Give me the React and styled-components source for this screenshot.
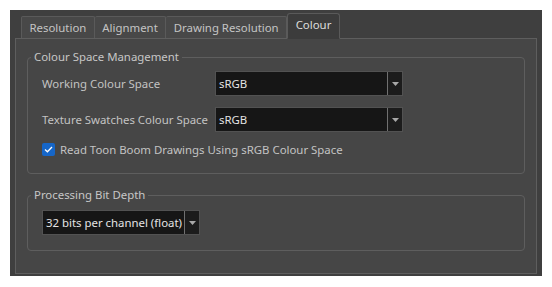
import React from "react";
import styled, { createGlobalStyle } from "styled-components";

const GlobalStyle = createGlobalStyle`
  html, body {
    margin: 0;
    padding: 0;
    background: #ffffff;
  }
  body {
    font-family: "Noto Sans", "Open Sans", sans-serif;
    font-size: 11.4px;
  }
`;

const Window = styled.div`
  margin: 10px;
  width: 532px;
  height: 266px;
  box-sizing: border-box;
  background: #3f3f3f;
  padding: 3px 5px 0 5px;
  display: flex;
  flex-direction: column;
`;

const TabBar = styled.div`
  display: flex;
  align-items: flex-end;
  padding-left: 6px;
  height: 25px;
  position: relative;
  z-index: 1;
`;

const Tab = styled.div`
  box-sizing: border-box;
  height: ${(p) => (p.$active ? "26px" : "22px")};
  padding: 0 7.5px;
  display: flex;
  align-items: center;
  white-space: nowrap;
  color: ${(p) => (p.$active ? "#dcdcdc" : "#c4c4c4")};
  background: ${(p) => (p.$active ? "#3c3c3c" : "#484848")};
  border: 1px solid #5a5a5a;
  border-bottom: ${(p) => (p.$active ? "1px solid #3c3c3c" : "none")};
  border-left: ${(p) => (p.$first || p.$active ? "1px solid #5a5a5a" : "none")};
  border-radius: ${(p) => (p.$active ? "3px 3px 0 0" : "2px 2px 0 0")};
  margin-bottom: ${(p) => (p.$active ? "-1px" : "0")};
  line-height: 1;
  padding-bottom: ${(p) => (p.$active ? "3px" : "0")};
`;

const Pane = styled.div`
  flex: 1;
  box-sizing: border-box;
  margin-bottom: 2px;
  background: #464646;
  border: 1px solid #5e5e5e;
  padding: 10px 11px 0 11px;
  display: flex;
  flex-direction: column;
  gap: 13px;
`;

const Group = styled.fieldset`
  margin: 0;
  border: 1px solid #5e5e5e;
  border-radius: 4px;
  padding: ${(p) => p.$pad};
  min-width: 0;
`;

const Legend = styled.legend`
  color: #c6c6c6;
  padding: 0 3px;
  margin-left: -11px;
  line-height: 16px;
`;

const FormGrid = styled.div`
  display: grid;
  grid-template-columns: 173px 188px;
  row-gap: 11px;
  align-items: center;
`;

const Label = styled.div`
  color: #c3c3c3;
  white-space: nowrap;
`;

const Combo = styled.div`
  box-sizing: border-box;
  width: ${(p) => p.$width}px;
  height: 25px;
  display: flex;
  background: #161616;
  border: 1px solid #525252;
`;

const ComboText = styled.div`
  flex: 1;
  display: flex;
  align-items: center;
  padding-left: 3px;
  color: #e4e4e4;
  white-space: nowrap;
  overflow: hidden;
`;

const ComboButton = styled.div`
  width: 15px;
  box-sizing: border-box;
  border-left: 1px solid #707070;
  background: #1c1c1c;
  display: flex;
  align-items: center;
  justify-content: center;
`;

const CheckRow = styled.label`
  display: flex;
  align-items: center;
  gap: 5px;
  color: #c3c3c3;
  margin-top: 10px;
`;

const CheckBox = styled.span`
  width: 13px;
  height: 13px;
  border-radius: 2px;
  background: #1666c8;
  display: flex;
  align-items: center;
  justify-content: center;
`;

const Arrow = () => (
  <svg width="7" height="4" viewBox="0 0 7 4">
    <path d="M0 0 H7 L3.5 4 Z" fill="#a8a8a8" />
  </svg>
);

const Check = () => (
  <svg width="9" height="7" viewBox="0 0 9 7">
    <path d="M1 3.6 L3.4 5.8 L8 1" stroke="#ffffff" strokeWidth="1.3" fill="none" />
  </svg>
);

const Select = ({ value, width }) => (
  <Combo $width={width}>
    <ComboText>{value}</ComboText>
    <ComboButton>
      <Arrow />
    </ComboButton>
  </Combo>
);

export default function App() {
  return (
    <>
      <GlobalStyle />
      <Window>
        <TabBar>
          <Tab $first>Resolution</Tab>
          <Tab>Alignment</Tab>
          <Tab>Drawing Resolution</Tab>
          <Tab $active>Colour</Tab>
        </TabBar>
        <Pane>
          <Group $pad="6px 14px 16px 14px">
            <Legend>Colour Space Management</Legend>
            <FormGrid>
              <Label>Working Colour Space</Label>
              <Select value="sRGB" width={188} />
              <Label>Texture Swatches Colour Space</Label>
              <Select value="sRGB" width={188} />
            </FormGrid>
            <CheckRow>
              <CheckBox>
                <Check />
              </CheckBox>
              Read Toon Boom Drawings Using sRGB Colour Space
            </CheckRow>
          </Group>
          <Group $pad="7px 14px 15px 14px">
            <Legend>Processing Bit Depth</Legend>
            <Select value="32 bits per channel (float)" width={158} />
          </Group>
        </Pane>
      </Window>
    </>
  );
}
